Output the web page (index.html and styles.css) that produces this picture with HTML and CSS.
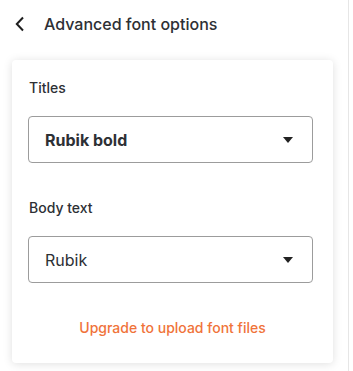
FILE: index.html
```html
<!DOCTYPE html>
<html lang="en">
<head>
  <meta charset="UTF-8">
  <meta name="viewport" content="width=device-width, initial-scale=1">
  <title>Advanced font options</title>
  <link rel="stylesheet" href="styles.css">
</head>
<body>
  <div class="panel">
    <header class="panel-header">
      <button class="back-btn" aria-label="Back">
        <svg width="10" height="16" viewBox="0 0 10 16">
          <polyline points="8,1.5 1.8,8 8,14.5" fill="none" stroke="#1f1f1f" stroke-width="2" />
        </svg>
      </button>
      <h1>Advanced font options</h1>
    </header>

    <section class="card">
      <div class="field">
        <label>Titles</label>
        <div class="select">
          <span class="select-value bold">Rubik bold</span>
          <span class="caret"></span>
        </div>
      </div>

      <div class="field">
        <label>Body text</label>
        <div class="select">
          <span class="select-value">Rubik</span>
          <span class="caret"></span>
        </div>
      </div>

      <a class="upgrade-link" href="#">Upgrade to upload font files</a>
    </section>
  </div>
</body>
</html>
```

FILE: styles.css
```css
:root {
  --text: #2d3035;
  --border: #9c9c9c;
  --orange: #f0733a;
}

body {
  margin: 0;
  background: #fff;
  font-family: Inter, Roboto, "Liberation Sans", sans-serif;
  color: var(--text);
}

.panel {
  width: 349px;
  min-height: 371px;
  border-right: 1px solid #e6e6e6;
  box-sizing: border-box;
}

.panel-header {
  height: 48px;
  display: flex;
  align-items: center;
  padding-left: 15px;
}

.back-btn {
  background: none;
  border: none;
  padding: 0;
  width: 29px;
  display: flex;
  align-items: center;
  cursor: pointer;
}

.panel-header h1 {
  margin: 0;
  font-size: 16px;
  font-weight: 500;
  color: var(--text);
}

.card {
  margin: 12px 15px 0 12px;
  background: #fff;
  border-radius: 4px;
  box-shadow: 0 1px 10px rgba(0, 0, 0, 0.13);
  padding: 18px 20px 25px 16px;
  display: flex;
  flex-direction: column;
}

.field {
  display: flex;
  flex-direction: column;
  margin-bottom: 35px;
}

.field label {
  font-size: 14px;
  font-weight: 500;
  line-height: 20px;
  margin: 0 0 18px 1px;
}

.select {
  height: 47px;
  box-sizing: border-box;
  border: 1px solid var(--border);
  border-radius: 4px;
  display: flex;
  align-items: center;
  justify-content: space-between;
  padding: 0 19px 0 16px;
}

.select-value {
  font-size: 16px;
}

.select-value.bold {
  font-weight: 700;
}

.caret {
  width: 0;
  height: 0;
  border-left: 5px solid transparent;
  border-right: 5px solid transparent;
  border-top: 6px solid #222;
}

.upgrade-link {
  align-self: center;
  margin-left: 4px;
  font-size: 14px;
  font-weight: 500;
  line-height: 20px;
  color: var(--orange);
  text-decoration: none;
}
```
